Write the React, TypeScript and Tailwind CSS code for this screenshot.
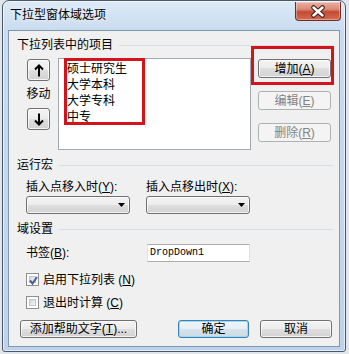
const ui = "font-['Liberation_Sans','Noto_Sans_CJK_SC',sans-serif] text-[12px] leading-[12px] text-black";

const btnNormal =
  "border-[#707070] bg-[linear-gradient(#f3f3f3_0%,#ececec_50%,#dfdfdf_50%,#d2d2d2_100%)] shadow-[inset_0_0_0_1px_rgba(255,255,255,0.75)]";
const btnDefault =
  "border-[#3c7fb1] bg-[linear-gradient(#eef6fb_0%,#e6eff5_50%,#d6e3ec_50%,#cddbe6_100%)] shadow-[inset_0_0_0_1px_#9fd8f3]";
const btnDisabled = "border-[#adb2b5] bg-[#f4f4f4] text-[#838383]";

function Btn({
  children,
  className = "",
  kind = "normal",
}: {
  children: React.ReactNode;
  className?: string;
  kind?: "normal" | "default" | "disabled";
}) {
  const look = kind === "default" ? btnDefault : kind === "disabled" ? btnDisabled : btnNormal;
  return (
    <div className={`flex items-center justify-center rounded-[3px] border ${look} ${className}`}>
      {children}
    </div>
  );
}

function GroupTitle({ label, className = "" }: { label: string; className?: string }) {
  return (
    <div className={`flex items-center h-[12px] pl-[8px] pr-[6px] ${className}`}>
      <span>{label}</span>
      <div className="ml-[6px] flex-1 border-t border-[#d5dfe5]" />
    </div>
  );
}

function Combo() {
  return (
    <div className={`w-[104px] h-[18px] flex items-center justify-end pr-[4px] rounded-[3px] border ${btnNormal}`}>
      <svg width="7" height="4" viewBox="0 0 7 4">
        <polygon points="0,0 7,0 3.5,4" fill="#000" />
      </svg>
    </div>
  );
}

function Check({ checked }: { checked?: boolean }) {
  return (
    <div className="relative w-[13px] h-[13px] border border-[#8e8f8f] bg-white p-[2px]">
      <div className="w-full h-full border border-[#c3c6cb] bg-[linear-gradient(135deg,#d3d6da,#f7f7f7)]" />
      {checked && (
        <svg className="absolute left-[1px] top-[1px]" width="11" height="11" viewBox="0 0 11 11">
          <path d="M2 5.5 L4.5 8.5 L9 2" fill="none" stroke="#4a5f97" strokeWidth="2" />
        </svg>
      )}
    </div>
  );
}

function Key({ k }: { k: string }) {
  return (
    <span>
      (<span className="underline">{k}</span>)
    </span>
  );
}

function Arrow({ down }: { down?: boolean }) {
  return (
    <svg width="10" height="13" viewBox="0 0 10 13" className={down ? "rotate-180" : ""}>
      <path d="M5 1.5 V12.5 M1 5.5 L5 1.5 L9 5.5" fill="none" stroke="#000" strokeWidth="2" />
    </svg>
  );
}

export default function App() {
  return (
    <div className={`w-[349px] h-[354px] bg-[#e1e6ec] pl-[2px] ${ui}`}>
      <div className="w-[344px] h-[352px] flex flex-col rounded-t-[7px] rounded-b-[3px] border border-[#4d5867] bg-[linear-gradient(180deg,#dde9f6_0%,#c9dcf0_30px,#bed3eb_100%)] shadow-[inset_0_0_0_1px_rgba(255,255,255,0.55)]">
        {/* title bar */}
        <div className="h-[29px] flex justify-between pl-[7px] pr-[4px]">
          <span className="pt-[7px] leading-[14px] [text-shadow:0_0_6px_#fff]">下拉型窗体域选项</span>
          <div className="mt-[1px] w-[46px] h-[19px] flex items-center justify-center rounded-b-[4px] border border-t-0 border-[#6e2d24] bg-[linear-gradient(#eab0a2_0%,#dc8a78_40%,#c44a33_55%,#d46c52_100%)] shadow-[inset_0_0_0_1px_rgba(255,255,255,0.35)]">
            <svg width="16" height="13" viewBox="0 0 16 13">
              <path d="M3.5 2.5 L12.5 10.5 M12.5 2.5 L3.5 10.5" stroke="#3b1d19" strokeWidth="4.5" strokeLinecap="round" />
              <path d="M3.5 2.5 L12.5 10.5 M12.5 2.5 L3.5 10.5" stroke="#fff" strokeWidth="2.5" strokeLinecap="round" />
            </svg>
          </div>
        </div>

        {/* client area */}
        <div className="mx-[5px] h-[317px] border border-[#8196b0] bg-[#f0f0f0] flex flex-col">
          <GroupTitle label="下拉列表中的项目" className="mt-[8px]" />

          <div className="mt-[7px] h-[92px] flex">
            <div className="ml-[17px] w-[25px] flex flex-col items-center">
              <Btn className="mt-[1px] w-[23px] h-[22px]">
                <Arrow />
              </Btn>
              <span className="mt-[7px]">移动</span>
              <Btn className="mt-[8px] w-[23px] h-[22px]">
                <Arrow down />
              </Btn>
            </div>

            <div className="relative ml-[7px] w-[193px] h-[92px] border border-[#a3a9b1] bg-white pl-[8px] pt-[2px] leading-[16px]">
              <div>硕士研究生</div>
              <div>大学本科</div>
              <div>大学专科</div>
              <div>中专</div>
              <div className="absolute left-[5px] top-[-1px] w-[81px] h-[67px] border-[3px] border-[#d4131b]" />
            </div>

            <div className="ml-[7px] w-[73px] flex flex-col">
              <div className="relative mt-[1px]">
                <Btn className="h-[19px]">
                  增加<Key k="A" />
                </Btn>
                <div className="absolute left-[-7px] top-[-13px] w-[83px] h-[39px] border-[3px] border-[#d4131b]" />
              </div>
              <Btn kind="disabled" className="mt-[13px] h-[19px]">
                编辑 <Key k="E" />
              </Btn>
              <Btn kind="disabled" className="mt-[13px] h-[19px]">
                删除 <Key k="R" />
              </Btn>
            </div>
          </div>

          <GroupTitle label="运行宏" className="mt-[9px]" />

          <div className="mt-[10px] ml-[17px] flex gap-[16px]">
            <span className="w-[104px] whitespace-nowrap">
              插入点移入时<Key k="Y" />:
            </span>
            <span className="w-[104px] whitespace-nowrap">
              插入点移出时<Key k="X" />:
            </span>
          </div>
          <div className="mt-[3px] ml-[17px] flex gap-[16px]">
            <Combo />
            <Combo />
          </div>

          <GroupTitle label="域设置" className="mt-[9px]" />

          <div className="mt-[9px] ml-[17px] h-[18px] flex items-center">
            <span className="w-[121px]">
              书签<Key k="B" />:
            </span>
            <div className="w-[103px] h-[18px] border border-[#abadb3] border-l-[#e2e3ea] border-r-[#dbdfe6] bg-white pl-[2px] flex items-center font-['Liberation_Mono',monospace] text-[10px]">
              DropDown1
            </div>
          </div>

          <div className="mt-[11px] ml-[17px] flex items-center gap-[4px]">
            <Check checked />
            <span>
              启用下拉列表 <Key k="N" />
            </span>
          </div>
          <div className="mt-[10px] ml-[17px] flex items-center gap-[4px]">
            <Check />
            <span>
              退出时计算 <Key k="C" />
            </span>
          </div>

          <div className="mt-[11px] ml-[11px] flex">
            <Btn className="w-[117px] h-[18px]">
              添加帮助文字<Key k="T" />...
            </Btn>
            <Btn kind="default" className="ml-[41px] w-[71px] h-[18px]">
              确定
            </Btn>
            <Btn className="ml-[11px] w-[72px] h-[18px]">取消</Btn>
          </div>
        </div>
      </div>
    </div>
  );
}
